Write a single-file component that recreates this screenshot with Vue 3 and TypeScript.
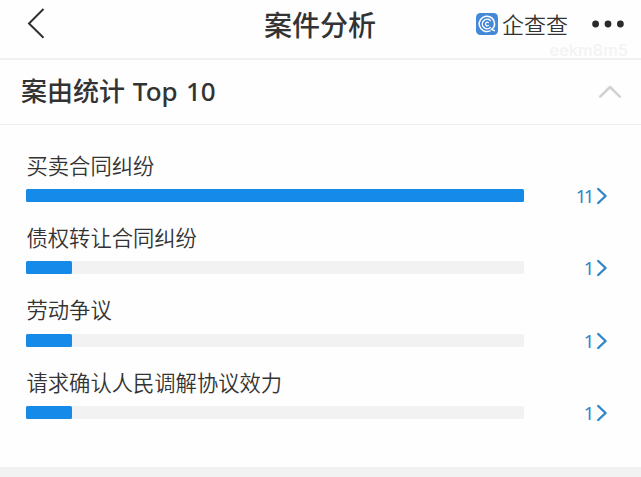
<script setup lang="ts">
interface CauseItem {
  name: string
  count: number
  width: number
}

const causes: CauseItem[] = [
  { name: '买卖合同纠纷', count: 11, width: 100 },
  { name: '债权转让合同纠纷', count: 1, width: 9.2 },
  { name: '劳动争议', count: 1, width: 9.2 },
  { name: '请求确认人民调解协议效力', count: 1, width: 9.2 },
]
</script>

<template>
  <main class="page">
    <header class="navbar">
      <svg class="back" width="20" height="32" viewBox="0 0 20 32">
        <path d="M17.5 1 L3 15.5 L17.5 29.8" fill="none" stroke="#303030" stroke-width="2" />
      </svg>
      <h1 class="title">案件分析</h1>
      <div class="brand">
        <svg width="22" height="22" viewBox="0 0 22 22">
          <rect width="22" height="22" rx="4.5" fill="#4488d8" />
          <g fill="none" stroke="#fff" stroke-linecap="round">
            <path d="M14 17.9 A7.7 7.7 0 1 1 18.6 11 Q18.5 14.5 15.6 16.4 L18.4 17.6" stroke-width="1.5" />
            <path d="M14.3 7.6 A4.7 4.7 0 1 0 14.3 14.4" stroke-width="1.4" />
            <path d="M12.4 9.6 A1.8 1.8 0 1 0 12.4 12.4" stroke-width="1.2" />
          </g>
        </svg>
        <span class="brand-name">企查查</span>
      </div>
      <svg class="more" width="32" height="8" viewBox="0 0 32 8">
        <g fill="#2b2b2b">
          <circle cx="3.6" cy="4" r="3.4" />
          <circle cx="16" cy="4" r="3.4" />
          <circle cx="28.4" cy="4" r="3.4" />
        </g>
      </svg>
      <span class="watermark">eekm8m5</span>
    </header>

    <section class="section-head">
      <h2 class="section-title">案由统计 <span class="latin">Top 10</span></h2>
      <svg width="24" height="16" viewBox="0 0 24 16">
        <path d="M2.2 12.6 L12 3 L21.8 12.6" fill="none" stroke="#d2d2d2" stroke-width="2.6" stroke-linecap="round" stroke-linejoin="round" />
      </svg>
    </section>

    <ul class="list">
      <li v-for="item in causes" :key="item.name" class="item">
        <div class="name">{{ item.name }}</div>
        <div class="row">
          <div class="track">
            <div class="fill" :style="{ width: item.width + '%' }"></div>
          </div>
          <span class="count">{{ item.count }}</span>
          <svg class="arrow" width="12" height="18" viewBox="0 0 12 18">
            <path d="M2.2 2 L9.6 9 L2.2 16" fill="none" stroke="#2f86c9" stroke-width="2.4" stroke-linecap="round" stroke-linejoin="round" />
          </svg>
        </div>
      </li>
    </ul>
    <footer class="gap"></footer>
  </main>
</template>

<style>
body {
  background: #fff;
}
</style>

<style scoped>
.page {
  display: flex;
  flex-direction: column;
  width: 641px;
  height: 477px;
  overflow: hidden;
  background: #fefefe;
  color: #333;
  font-family: "Noto Sans CJK SC", sans-serif;
}
.navbar {
  position: relative;
  box-sizing: border-box;
  display: flex;
  align-items: center;
  height: 60px;
  padding: 0 17px 11px 26px;
  border-bottom: 2px solid #f1f1f1;
}
.back {
  flex: none;
}
.title {
  flex: none;
  margin: 0 0 0 218px;
  font-size: 28px;
  line-height: 40px;
  font-weight: 500;
}
.brand {
  display: flex;
  align-items: center;
  gap: 4px;
  margin-left: auto;
}
.brand-name {
  margin-top: -2px;
  font-size: 22px;
  line-height: 30px;
  font-weight: 350;
}
.more {
  margin-left: 24px;
}
.watermark {
  position: absolute;
  right: 13px;
  top: 41px;
  font: 500 16.5px/18px Inter, sans-serif;
  color: #f3f3f3;
}
.section-head {
  box-sizing: border-box;
  display: flex;
  align-items: center;
  justify-content: space-between;
  height: 65px;
  padding: 0 19px 0 21px;
  border-bottom: 1px solid #eee;
}
.section-title {
  margin: -3px 0 0;
  font-size: 26px;
  line-height: 38px;
  font-weight: 500;
}
.latin {
  margin-left: 2px;
  font-family: "Noto Sans", sans-serif;
  font-size: 26px;
  word-spacing: 1.5px;
}
.list {
  flex: 1;
  margin: 0;
  padding: 22.6px 33px 0 26px;
  list-style: none;
}
.item {
  height: 72.33px;
}
.name {
  height: 34px;
  padding-left: 0.5px;
  font-size: 21.3px;
  line-height: 33px;
  font-weight: 350;
}
.row {
  display: flex;
  align-items: center;
  height: 28px;
}
.track {
  width: 498.4px;
  height: 13px;
  border-radius: 1.5px;
  background: #f2f2f2;
}
.fill {
  height: 100%;
  border-radius: 1.5px;
  background: #168ae8;
}
.count {
  margin: 1px 0 0 auto;
  font-family: "Noto Sans", sans-serif;
  font-size: 18.5px;
  letter-spacing: -2.4px;
  line-height: 24px;
  color: #2f86c9;
}
.arrow {
  margin: 1px 0 0 4px;
}
.gap {
  height: 10px;
  background: #f2f2f2;
}
</style>
